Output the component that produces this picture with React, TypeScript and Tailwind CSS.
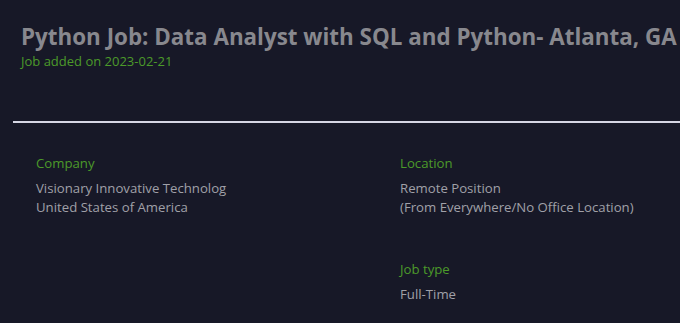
import React from "react";

export default function App() {
  return (
    <div className="w-[680px] h-[323px] overflow-hidden bg-[#171827] font-['Open_Sans','Noto_Sans',sans-serif]">
      <div className="pl-[21px] pt-[22px]">
        <h1 className="text-[22.4px] leading-[30px] font-bold text-[#88888e] whitespace-nowrap">
          Python Job: Data Analyst with SQL and Python- Atlanta, GA
        </h1>
        <p className="text-[13px] leading-[18px] text-[#4c9a2a]">Job added on 2023-02-21</p>
      </div>
      <div className="ml-[13px] mt-[51px] h-[2px] bg-[#d6d6e4]" />
      <div className="grid grid-cols-[364px_1fr] pl-[36px] pt-[31px] text-[13.2px] leading-[19px]">
        <div>
          <div className="text-[#4c9a2a]">Company</div>
          <div className="mt-[6px] text-[#a0a0a8]">
            <div>Visionary Innovative Technolog</div>
            <div>United States of America</div>
          </div>
        </div>
        <div>
          <div className="text-[#4c9a2a]">Location</div>
          <div className="mt-[6px] text-[#a0a0a8]">
            <div>Remote Position</div>
            <div>(From Everywhere/No Office Location)</div>
          </div>
          <div className="mt-[43px] text-[#4c9a2a]">Job type</div>
          <div className="mt-[6px] text-[#a0a0a8]">Full-Time</div>
        </div>
      </div>
    </div>
  );
}
